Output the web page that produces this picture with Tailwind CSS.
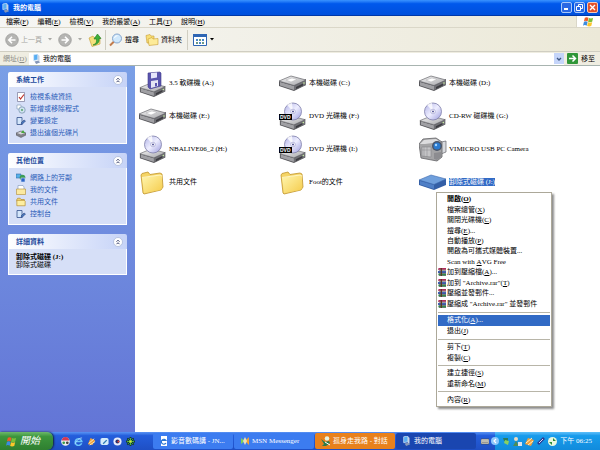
<!DOCTYPE html>
<html lang="zh-Hant">
<head>
    <meta charset="UTF-8">
    <meta name="viewport" content="width=device-width, initial-scale=1.0">
    <title>我的電腦</title>
    <script src="https://cdn.jsdelivr.net/npm/@tailwindcss/browser@4"></script>
</head>
<body class="flex h-screen flex-col overflow-hidden bg-white font-['Liberation_Serif','Noto_Sans_CJK_TC',serif] text-[7px] leading-[10px] text-black">
    <!-- Shared icons, kept out of the flow: gradients are dropped inside display:none -->
    <svg class="absolute size-0" aria-hidden="true">
        <defs>
            <linearGradient id="top" x1="0" y1="0" x2="1" y2="1"><stop offset="0" stop-color="#f6f6f6"/><stop offset="1" stop-color="#a4a4a8"/></linearGradient>
            <linearGradient id="cd" x1="0" y1="0" x2="1" y2="1"><stop offset="0" stop-color="#b0b2e6"/><stop offset=".5" stop-color="#eeeeff"/><stop offset="1" stop-color="#9a9adc"/></linearGradient>
            <linearGradient id="yellow" x1="0" y1="0" x2="1" y2="1"><stop offset="0" stop-color="#fff6b0"/><stop offset="1" stop-color="#f5cc4c"/></linearGradient>
        </defs>
        <symbol id="computer" viewBox="0 0 10 12">
            <path d="M1 1l5-1v7l-5 1z" fill="#58aef2" stroke="#dbeaf8" stroke-width=".8"/>
            <path d="M6 1l2 1v7l-2 1z" fill="#c9d4e4"/>
            <path d="M2 9l4-1 3 2-5 2z" fill="#8597b8"/>
        </symbol>
        <symbol id="drive" viewBox="0 0 28 16">
            <path d="M0 6v5l15 5 12-6V4L15 10z" fill="#58585c"/>
            <path d="M1 7l14 4v4L1 10.500z" fill="#a0a0a4"/>
            <path d="M15 11l12-6v5l-12 5z" fill="#707075"/>
            <path d="M0 6l12-5 15 4-12 5.500z" fill="url(#top)" stroke="#66666b" stroke-width=".7"/>
            <path d="M17 12l7-3.500v2L17 14z" fill="#3c3c40"/>
            <circle cx="25" cy="8" r=".8" fill="#c8f0a0"/>
        </symbol>
        <symbol id="hdd" viewBox="0 0 28 28">
            <use href="#drive" y="6" width="28" height="16"/>
            <path d="M7 11l6-2 5 1.500-6 2.500z" fill="#fff" stroke="#b0b0b4" stroke-width=".5"/>
        </symbol>
        <symbol id="floppy" viewBox="0 0 28 28">
            <use href="#drive" y="13" width="28" height="15"/>
            <path d="M9 4l12-1 1 1v13l-11 3-2-2z" fill="#5a55ae" stroke="#413d8c" stroke-width=".6"/>
            <path d="M12 4l6-.5v5l-6 1z" fill="#e6e6fa"/>
            <path d="M12 12l7-1v6l-7 2z" fill="#e4e6f4"/>
            <path d="M16 14l2 0v3l-2 .5z" fill="#5a55ae"/>
        </symbol>
        <symbol id="disc" viewBox="0 0 28 28">
            <use href="#drive" y="13" width="28" height="15"/>
            <circle cx="14" cy="9.500" r="8.500" fill="url(#cd)" stroke="#7c7ca8" stroke-width=".8"/>
            <path d="M14 9.500L8 3a9 9 0 0 1 5-2z" fill="#fff" opacity=".8"/>
            <circle cx="14" cy="9.500" r="2.300" fill="#fff" stroke="#9494c8" stroke-width=".6"/>
            <circle cx="14" cy="9.500" r="1" fill="#55559a"/>
        </symbol>
        <symbol id="folder" viewBox="0 0 28 28">
            <path d="M2 7l1-1.500L9 4l2 2.500L21 5l2 1 1 13-2 3L5 26l-1-1z" fill="#f5d465" stroke="#c0942c" stroke-width=".8"/>
            <path d="M3 10l18-3 2 1v12l-2 2L5 25z" fill="url(#yellow)"/>
            <path d="M3 9.500L21 7l2 1" fill="none" stroke="#fffbd8" stroke-width=".8"/>
        </symbol>
        <symbol id="camera" viewBox="0 0 28 28">
            <path d="M22 7l5-1v11l-5 2z" fill="#d8dade" stroke="#66666b" stroke-width=".7"/>
            <path d="M0 9l4-5 13-1 6 4v15l-5 4L2 23z" fill="#a4a4a6" stroke="#626266" stroke-width=".8"/>
            <path d="M1 9l4-4 12-1 4 3-15 2z" fill="#dcdcde"/>
            <path d="M3 12h9v10l-9-1z" fill="#c4c4c6" stroke="#7c7c80" stroke-width=".5"/>
            <path d="M5 12v10M8 12v10M3 15h9" stroke="#88888c" stroke-width=".5"/>
            <circle cx="18" cy="11" r="5" fill="#4b5568"/>
            <circle cx="18" cy="11" r="3.500" fill="#2a7ad0"/>
            <circle cx="17" cy="10" r="1.200" fill="#a5d6ff"/>
            <path d="M15 18l7-1v5l-4 3-3-1z" fill="#8c8c90"/>
        </symbol>
        <symbol id="removable" viewBox="0 0 28 28">
            <path d="M0 12v5l15 5 12-5v-6z" fill="#345fa6"/>
            <path d="M0 12l12-5 15 4-12 5.500z" fill="#6f9fdc" stroke="#3e69ae" stroke-width=".6"/>
            <path d="M1 13l14 4v4L1 16.500z" fill="#4f7fc6"/>
        </symbol>
        <symbol id="books" viewBox="0 0 9 9">
            <path d="M0 1l1-1h8v2H0z" fill="#b02c5c"/>
            <path d="M0 3.500h9v2H0z" fill="#2c4ea8"/>
            <path d="M0 6.500h9v2H1z" fill="#2f8c4c"/>
            <path d="M1 2.500h8M1 6h8M1 8.800h8" stroke="#222" stroke-width=".7"/>
            <path d="M3 0h1.500v9H3z" fill="#5b3a22"/>
        </symbol>
        <symbol id="flag" viewBox="0 0 12 12">
            <path d="M2 2q2-1.500 4 0L5 6Q3 4.500 1 6z" fill="#f05a28"/>
            <path d="M6.500 2.300q2 1 4.500 0l-1 4q-2.500 1-4.500 0z" fill="#7cbf3a"/>
            <path d="M1 6.600q2-1.500 4 0l-1 4q-2-1.500-4 0z" fill="#3c8ce0"/>
            <path d="M5.500 6.900q2 1 4.500 0l-1 4q-2.500 1-4.500 0z" fill="#fcc62c"/>
        </symbol>
        <symbol id="smallfolder" viewBox="0 0 12 12">
            <path d="M1 3l1-1.500h3L6 3h4v2H1z" fill="#f5dc7c" stroke="#b48a28" stroke-width=".8"/>
            <path d="M1 10.500V4h9l1 1v5.500z" fill="#fdeea0" stroke="#b48a28" stroke-width=".8"/>
        </symbol>
        <symbol id="collapse" viewBox="0 0 10 10">
            <circle cx="5" cy="5" r="4.500" fill="#fff" stroke="#a4b2d4" stroke-width=".7"/>
            <path d="M3.500 4.700L5 3.200l1.500 1.500M3.500 7.200L5 5.700l1.500 1.500" fill="none" stroke="#27305c" stroke-width=".9"/>
        </symbol>
        <symbol id="settings" viewBox="0 0 10 10">
            <path d="M1 1.500h5v7H1z" fill="#d4e6fb" stroke="#34508c" stroke-width=".8"/>
            <path d="M5 7l3-3 1.500 1L6 8.500z" fill="#4878bc" stroke="#1e3670" stroke-width=".5"/>
        </symbol>
        <symbol id="caret" viewBox="0 0 4 3"><path d="M0 0h4L2 2.500z" fill="currentColor"/></symbol>
    </svg>

    <!-- Title bar -->
    <header class="flex h-4 shrink-0 items-center justify-between bg-linear-to-b from-[#3a93ff] via-[#0058ec] via-25% to-[#0050dc] pr-0.5 pl-0.5 text-white border-b border-[#0038a8]">
        <h1 class="flex items-center gap-[3px] font-bold"><svg class="h-2.5 w-2"><use href="#computer"/></svg>我的電腦</h1>
        <div class="flex gap-0.5">
            <button aria-label="最小化" class="flex h-[11px] w-[11px] items-end rounded-xs border border-[#a9c8f8] bg-[#2a68e4] p-0.5"><span class="h-0.5 w-1 bg-white"></span></button>
            <button aria-label="還原" class="h-[11px] w-[11px] rounded-xs border border-[#a9c8f8] bg-[#2a68e4]"><svg viewBox="0 0 9 9"><path d="M3.500 3V1.500h4v4H6M1.500 3.500h4v4h-4z" fill="none" stroke="#fff"/></svg></button>
            <button aria-label="關閉" class="h-[11px] w-[11px] rounded-xs border border-[#f4c8b8] bg-[#e2532c]"><svg viewBox="0 0 9 9"><path d="M2 2l5 5M7 2L2 7" stroke="#fff" stroke-width="1.400"/></svg></button>
        </div>
    </header>

    <!-- Menu bar -->
    <nav class="flex h-3 shrink-0 items-stretch justify-between border-b border-[#dad7c8] bg-linear-to-r from-[#f6f6f4] to-[#ece9d8]">
        <div class="flex items-center gap-[9px] pl-1.5">
            <button>檔案(<u>F</u>)</button>
            <button>編輯(<u>E</u>)</button>
            <button>檢視(<u>V</u>)</button>
            <button>我的最愛(<u>A</u>)</button>
            <button>工具(<u>T</u>)</button>
            <button>說明(<u>H</u>)</button>
        </div>
        <div class="flex w-6 items-center justify-center border-l border-[#dad7c8] bg-white"><svg class="h-[11px] w-[11px]"><use href="#flag"/></svg></div>
    </nav>

    <!-- Toolbar -->
    <div class="flex h-6 shrink-0 items-center border-b border-[#d0cec2] bg-linear-to-r from-[#f6f6f4] to-[#ece9d8] pl-[5px]">
        <button class="flex items-center gap-0.5 text-[#a8a8a4]">
            <svg class="size-3.5" viewBox="0 0 14 14"><circle cx="7" cy="7" r="6.300" fill="#b5b5b3" stroke="#989896" stroke-width=".7"/><path d="M10.500 7H4M7 3.800L3.800 7 7 10.200" fill="none" stroke="#fff" stroke-width="1.600"/></svg>
            上一頁
            <svg class="ml-1 h-[3px] w-1"><use href="#caret"/></svg>
        </button>
        <button aria-label="下一頁" class="ml-1.5 flex items-center gap-1.5 text-[#a8a8a4]">
            <svg class="size-3.5" viewBox="0 0 14 14"><circle cx="7" cy="7" r="6.300" fill="#b5b5b3" stroke="#989896" stroke-width=".7"/><path d="M3.500 7H10M7 3.800L10.200 7 7 10.200" fill="none" stroke="#fff" stroke-width="1.600"/></svg>
            <svg class="h-[3px] w-1"><use href="#caret"/></svg>
        </button>
        <button aria-label="往上" class="ml-1.5">
            <svg class="size-3.5" viewBox="0 0 14 14"><path d="M1 5l4-2 1 1.500L12 4v7l-8 2.500z" fill="#f5e07c" stroke="#c29a34" stroke-width=".6"/><path d="M5 12c3-1 4-3 3.500-6H6l3.500-5L13 5.500h-2C12 9 9 12 5 12z" fill="#3eb03a" stroke="#1c7a22" stroke-width=".6"/></svg>
        </button>
        <span class="mx-[3px] h-5 w-px bg-[#d0cec2]"></span>
        <button class="flex items-center gap-0.5">
            <svg class="size-3.5" viewBox="0 0 14 14"><path d="M5 8.500l-4 4" stroke="#c27c4c" stroke-width="2"/><circle cx="8" cy="5.500" r="4.500" fill="#cfe8fc" stroke="#86a5cc"/><path d="M5.500 5a3 3 0 0 1 3-2.300" stroke="#fff" fill="none"/></svg>
            搜尋
        </button>
        <button class="ml-1.5 flex items-center gap-0.5">
            <svg class="size-3.5" viewBox="0 0 14 14"><path d="M2 10L1 2.500l4-1 1 1.500h3v7z" fill="#f8df76" stroke="#c79c32" stroke-width=".6"/><path d="M4 12.500L3 6l4-1.500L8 6l5-.5v6z" fill="#fdeb98" stroke="#c79c32" stroke-width=".6"/></svg>
            資料夾
        </button>
        <span class="mx-[5px] h-5 w-px bg-[#d0cec2]"></span>
        <button aria-label="檢視" class="flex items-center gap-[3px]">
            <svg class="h-3 w-3.5" viewBox="0 0 14 12"><path d="M.5.500h13v11H.5z" fill="#fff" stroke="#2f66b4"/><path d="M0 0h14v3H0z" fill="#2f66b4"/><path d="M3 5h2v2H3zM6 8h2v2H6zM9 5h2v2H9z" fill="#4a86c8"/><path d="M6 5h2v2H6zM3 8h2v2H3zM9 8h2v2H9z" fill="#6b9a86"/></svg>
            <svg class="h-[3px] w-1"><use href="#caret"/></svg>
        </button>
    </div>

    <!-- Address bar -->
    <form class="flex h-3.5 shrink-0 items-center border-b border-[#a8b4b0] bg-[#efede1] pl-[3px]">
        <label for="address" class="w-[26px] text-[#8c8c86]">網址(<u>D</u>)</label>
        <div class="flex h-3 flex-1 items-center gap-px bg-white pl-[3px]">
            <svg class="h-2.5 w-2.5"><use href="#computer"/></svg>
            <input id="address" type="text" value="我的電腦" class="h-2.5 min-w-0 flex-1 outline-none">
            <button type="button" aria-label="展開網址" class="flex h-[11px] w-[10px] items-center justify-center bg-[#c5d5fa]"><svg class="h-2 w-2" viewBox="0 0 8 8"><path d="M2 3l2 2 2-2" fill="none" stroke="#3e5680" stroke-width="1.300"/></svg></button>
        </div>
        <button type="button" class="flex items-center gap-[3px] pr-[5px] pl-[3px]">
            <svg class="h-[11px] w-[11px]" viewBox="0 0 11 11"><rect width="11" height="11" rx="1" fill="#2f9638"/><path d="M2 5.500h6M5.500 2.500l3 3-3 3" fill="none" stroke="#fff" stroke-width="1.500"/></svg>
            移至
        </button>
    </form>

    <div class="flex min-h-0 flex-1">
        <!-- Task panes -->
        <aside class="flex w-[135px] shrink-0 flex-col gap-[9px] bg-linear-to-b from-[#7a9fe6] to-[#6375d6] px-2 pt-1.5 text-[#2a5cb8]">
            <section>
                <h2 class="flex h-[15px] items-center justify-between rounded-t-xs bg-linear-to-r from-white to-[#c6d3f7] pr-1 pl-2 font-bold text-[#1c4a9c]">系統工作<button aria-label="收合系統工作"><svg class="size-2.5"><use href="#collapse"/></svg></button></h2>
                <ul class="border border-t-0 border-white bg-[#d6dff7] py-1 pl-[7px] leading-3">
                    <li><a href="#" class="flex items-center gap-1"><svg class="size-2.5" viewBox="0 0 10 10"><path d="M1.500.500h7v9h-7z" fill="#fff" stroke="#7a7a98" stroke-width=".7"/><path d="M3 5l1.500 2L8 2.500" fill="none" stroke="#c0342c" stroke-width="1.200"/></svg>檢視系統資訊</a></li>
                    <li><a href="#" class="flex items-center gap-1"><svg class="size-2.5" viewBox="0 0 10 10"><path d="M1 1h4v4H1z" fill="#fff" stroke="#7c98b4" stroke-width=".6"/><circle cx="6" cy="6" r="3.200" fill="#cfe2ee" stroke="#7490ac" stroke-width=".7"/><circle cx="6" cy="6" r=".9" fill="#4a9c5c"/></svg>新增或移除程式</a></li>
                    <li><a href="#" class="flex items-center gap-1"><svg class="size-2.5"><use href="#settings"/></svg>變更設定</a></li>
                    <li><a href="#" class="flex items-center gap-1"><svg class="size-2.5" viewBox="0 0 10 10"><path d="M0 5l5-2 5 2v2L5 9.500 0 7z" fill="#82828a" stroke="#4c4c54" stroke-width=".5"/><path d="M1 5l4-1.500L9 5 5 6.500z" fill="#d8d8dc"/><path d="M5 5l2-3 2 3z" fill="#46a83c"/></svg>退出這個光碟片</a></li>
                </ul>
            </section>
            <section>
                <h2 class="flex h-[15px] items-center justify-between rounded-t-xs bg-linear-to-r from-white to-[#c6d3f7] pr-1 pl-2 font-bold text-[#1c4a9c]">其他位置<button aria-label="收合其他位置"><svg class="size-2.5"><use href="#collapse"/></svg></button></h2>
                <ul class="border border-t-0 border-white bg-[#d6dff7] py-1 pl-[7px] leading-3">
                    <li><a href="#" class="flex items-center gap-1"><svg class="size-2.5" viewBox="0 0 10 10"><path d="M0 1h5v4H0z" fill="#58b0e8" stroke="#3468a4" stroke-width=".6"/><circle cx="6.500" cy="4.500" r="2.800" fill="#3c9c58"/><path d="M5 5h4v4H5z" fill="#2c64c8" stroke="#d0e0f8" stroke-width=".6"/></svg>網路上的芳鄰</a></li>
                    <li><a href="#" class="flex items-center gap-1"><svg class="size-2.5" viewBox="0 0 10 10"><path d="M2 .500h5L8 2v5H2z" fill="#fff" stroke="#7c94b8" stroke-width=".6"/><path d="M.5 4h9v5.500h-9z" fill="#fbe9a0" stroke="#b08c34" stroke-width=".6"/></svg>我的文件</a></li>
                    <li><a href="#" class="flex items-center gap-1"><svg class="size-2.5"><use href="#smallfolder"/></svg>共用文件</a></li>
                    <li><a href="#" class="flex items-center gap-1"><svg class="size-2.5"><use href="#settings"/></svg>控制台</a></li>
                </ul>
            </section>
            <section>
                <h2 class="flex h-[15px] items-center justify-between rounded-t-xs bg-linear-to-r from-white to-[#c6d3f7] pr-1 pl-2 font-bold text-[#1c4a9c]">詳細資料<button aria-label="收合詳細資料"><svg class="size-2.5"><use href="#collapse"/></svg></button></h2>
                <div class="border border-t-0 border-white bg-[#d6dff7] pt-1 pb-[5px] pl-[7px] leading-2 text-black">
                    <p class="font-bold">卸除式磁碟 (J:)</p>
                    <p>卸除式磁碟</p>
                </div>
            </section>
        </aside>

        <!-- Drives -->
        <main class="relative flex-1 pl-1">
            <ul class="grid auto-rows-[33px] grid-cols-[repeat(auto-fill,140px)]">
                <li class="flex items-center gap-0.5"><svg class="size-7"><use href="#floppy"/></svg>3.5 軟碟機 (A:)</li>
                <li class="flex items-center gap-0.5"><svg class="size-7"><use href="#hdd"/></svg>本機磁碟 (C:)</li>
                <li class="flex items-center gap-0.5"><svg class="size-7"><use href="#hdd"/></svg>本機磁碟 (D:)</li>
                <li class="flex items-center gap-0.5"><svg class="size-7"><use href="#hdd"/></svg>本機磁碟 (E:)</li>
                <li class="flex items-center gap-0.5">
                    <span class="relative size-7"><svg class="size-7"><use href="#disc"/></svg><span class="absolute top-3 left-0 bg-black px-px font-['Liberation_Sans',sans-serif] text-[5px] leading-[6px] font-bold text-white">DVD</span></span>
                    DVD 光碟機 (F:)
                </li>
                <li class="flex items-center gap-0.5"><svg class="size-7"><use href="#disc"/></svg>CD-RW 磁碟機 (G:)</li>
                <li class="flex items-center gap-0.5"><svg class="size-7"><use href="#disc"/></svg>NBALIVE06_2 (H:)</li>
                <li class="flex items-center gap-0.5">
                    <span class="relative size-7"><svg class="size-7"><use href="#disc"/></svg><span class="absolute top-3 left-0 bg-black px-px font-['Liberation_Sans',sans-serif] text-[5px] leading-[6px] font-bold text-white">DVD</span></span>
                    DVD 光碟機 (I:)
                </li>
                <li class="flex items-center gap-0.5"><svg class="size-7"><use href="#camera"/></svg>VIMICRO USB PC Camera</li>
                <li class="flex items-center gap-0.5"><svg class="size-7"><use href="#folder"/></svg>共用文件</li>
                <li class="flex items-center gap-0.5"><svg class="size-7"><use href="#folder"/></svg>Foot的文件</li>
                <li class="flex items-center gap-0.5"><svg class="size-7"><use href="#removable"/></svg><span class="bg-[#316ac5] leading-2 text-white">卸除式磁碟 (J:)</span></li>
            </ul>

            <!-- Context menu -->
            <div role="menu" class="absolute top-[126px] left-[301px] w-[116px] border border-[#aca899] bg-white p-px shadow-[2px_2px_2px_rgba(0,0,0,0.45)]">
                <div class="grid h-[115px] auto-rows-fr">
                    <button role="menuitem" class="flex items-center pl-[9px] font-bold">開啟(<u>O</u>)</button>
                    <button role="menuitem" class="flex items-center pl-[9px]">檔案總管(<u>X</u>)</button>
                    <button role="menuitem" class="flex items-center pl-[9px]">關閉光碟機(<u>C</u>)</button>
                    <button role="menuitem" class="flex items-center pl-[9px]">搜尋(<u>E</u>)...</button>
                    <button role="menuitem" class="flex items-center pl-[9px]">自動播放(<u>P</u>)</button>
                    <button role="menuitem" class="flex items-center pl-[9px]">開啟為可攜式媒體裝置...</button>
                    <button role="menuitem" class="flex items-center pl-[9px] whitespace-pre">Scan with <u>A</u>VG Free</button>
                    <button role="menuitem" class="flex items-center"><svg class="mr-px size-2"><use href="#books"/></svg>加到壓縮檔(<u>A</u>)...</button>
                    <button role="menuitem" class="flex items-center whitespace-pre"><svg class="mr-px size-2"><use href="#books"/></svg>加到 "Archive.rar"(<u>T</u>)</button>
                    <button role="menuitem" class="flex items-center"><svg class="mr-px size-2"><use href="#books"/></svg>壓縮並發郵件...</button>
                    <button role="menuitem" class="flex items-center whitespace-pre"><svg class="mr-px size-2"><use href="#books"/></svg>壓縮成 "Archive.rar" 並發郵件</button>
                </div>
                <hr class="mt-[3px] mb-0.5 border-[#b8b5a8]">
                <div class="grid h-[21px] auto-rows-fr">
                    <button role="menuitem" class="flex items-center bg-[#316ac5] pl-[9px] text-white">格式化(<u>A</u>)...</button>
                    <button role="menuitem" class="flex items-center pl-[9px]">退出(<u>J</u>)</button>
                </div>
                <hr class="mt-[3px] mb-0.5 border-[#b8b5a8]">
                <div class="grid h-[21px] auto-rows-fr">
                    <button role="menuitem" class="flex items-center pl-[9px]">剪下(<u>T</u>)</button>
                    <button role="menuitem" class="flex items-center pl-[9px]">複製(<u>C</u>)</button>
                </div>
                <hr class="my-0.5 border-[#b8b5a8]">
                <div class="grid h-[21px] auto-rows-fr">
                    <button role="menuitem" class="flex items-center pl-[9px]">建立捷徑(<u>S</u>)</button>
                    <button role="menuitem" class="flex items-center pl-[9px]">重新命名(<u>M</u>)</button>
                </div>
                <hr class="my-0.5 border-[#b8b5a8]">
                <button role="menuitem" class="flex h-[11px] items-center pl-[9px]">內容(<u>R</u>)</button>
            </div>
        </main>
    </div>

    <!-- Taskbar -->
    <footer class="flex h-[18px] shrink-0 items-stretch bg-linear-to-b from-[#5a94f4] via-[#245edc] via-20% to-[#1f4fc4] text-white">
        <button class="flex w-[53px] items-center gap-[3px] rounded-r-md bg-linear-to-b from-[#6cb86a] via-[#3c963c] via-25% to-[#2f7f30] pl-1.5 text-[10px] italic shadow-[1px_0_2px_#123]"><svg class="size-[11px]"><use href="#flag"/></svg>開始</button>
        <div class="ml-2 flex w-[92px] items-center gap-1">
            <button aria-label="相簿"><svg class="size-[9px]" viewBox="0 0 10 10"><circle cx="5" cy="5" r="4.800" fill="#eee"/><path d="M1 4a4 4 0 0 1 8 0z" fill="#d43a52"/><circle cx="3" cy="6.500" r="1.500" fill="#3a9a4a"/><circle cx="7" cy="6.500" r="1.500" fill="#444"/></svg></button>
            <button aria-label="Internet Explorer"><svg class="size-[9px]" viewBox="0 0 10 10"><path d="M8.500 7A3.700 3.700 0 1 1 8.700 5H2" fill="none" stroke="#6cc4fa" stroke-width="1.700"/><path d="M1 8Q4 1 9 1" fill="none" stroke="#b8e4ff" stroke-width=".8"/></svg></button>
            <button aria-label="媒體播放"><svg class="size-[9px]" viewBox="0 0 10 10"><path d="M1 8l3-7 5 3-3 5z" fill="#f0a03a"/><path d="M2 7l6-5M3 9l6-4" stroke="#fff2c4"/></svg></button>
            <button aria-label="顯示桌面"><svg class="size-[9px]" viewBox="0 0 10 10"><rect x=".5" y="1" width="9" height="8" rx="2" fill="#d4ecfa"/><path d="M3 7l4-4 1 1-4 4z" fill="#2c78b4"/></svg></button>
            <button aria-label="播放程式"><svg class="size-[9px]" viewBox="0 0 10 10"><circle cx="5" cy="5" r="4.500" fill="#e8ecfa"/><circle cx="5" cy="5" r="2.300" fill="#27306c"/><circle cx="6" cy="5" r="1" fill="#f04a3a"/></svg></button>
            <button aria-label="ICQ"><svg class="size-[9px]" viewBox="0 0 10 10"><path d="M5 0v10M0 5h10M1.500 1.500l7 7M8.500 1.500l-7 7" stroke="#123c1c" stroke-width="2"/><path d="M5 1v8M1 5h8M2.500 2.500l5 5M7.500 2.500l-5 5" stroke="#5cc04a"/><circle cx="5" cy="5" r="1.200" fill="#f0e040"/></svg></button>
        </div>
        <div class="flex min-w-0 flex-1 gap-px py-px">
            <button class="flex w-20 items-center gap-0.5 rounded-xs bg-[#3c7cf0] pl-1.5"><svg class="size-2.5" viewBox="0 0 10 10"><path d="M2 0h6v10H2z" fill="#fff"/><path d="M7 7A2.500 2.500 0 1 1 7 4.500H3" fill="none" stroke="#2a74d0" stroke-width="1.200"/></svg>影音數碼講 - JN...</button>
            <button class="flex w-20 items-center gap-0.5 rounded-xs bg-[#3c7cf0] pl-1.5"><svg class="size-2.5" viewBox="0 0 10 10"><path d="M1 2l4 3-4 3z" fill="#7ad05a"/><path d="M9 1L5 5l4 4z" fill="#f4a030"/><path d="M5 1l2 4-2 4-2-4z" fill="#e8e0c0"/></svg>MSN Messenger</button>
            <button class="flex w-20 items-center gap-0.5 rounded-xs bg-[#e8811c] pl-1.5"><svg class="size-2.5" viewBox="0 0 10 10"><circle cx="6" cy="2.500" r="2.300" fill="#e8f4e0"/><path d="M0 3l4 3 4-1 1 2-4 3H1l2-2z" fill="#2d7c4c"/><path d="M4 6l5 3" stroke="#fff"/></svg>孤身走我路 - 對話</button>
            <button class="flex w-20 items-center gap-0.5 rounded-xs bg-[#1a46b0] pl-1.5"><svg class="size-2.5"><use href="#computer"/></svg>我的電腦</button>
        </div>
        <button aria-label="語言列" class="mr-1.5 shrink-0"><svg class="size-2" viewBox="0 0 8 8"><path d="M0 2h8v5H0z" fill="#e6e2d4" stroke="#444" stroke-width=".6"/><path d="M1 4h6M1 5.500h6" stroke="#666" stroke-width=".6"/></svg></button>
        <div class="flex shrink-0 items-center gap-[3px] bg-linear-to-b from-[#5cc0fa] via-[#189cec] via-20% to-[#118bdc] pr-2">
            <button aria-label="顯示隱藏圖示" class="-ml-1"><svg class="size-2" viewBox="0 0 8 8"><circle cx="4" cy="4" r="4" fill="#8cc8fc"/><path d="M5 2L3 4l2 2" fill="none" stroke="#fff" stroke-width="1.200"/></svg></button>
            <svg class="size-2" viewBox="0 0 8 8"><path d="M1 1h5v3H2z" fill="#2c7c5c"/><path d="M3 3l4 1-1 4-4-2z" fill="#8ad060"/></svg>
            <svg class="size-[9px]" viewBox="0 0 9 9"><circle cx="3" cy="2" r="2" fill="#eedcc0"/><path d="M0 9l3-5 3 5z" fill="#4c8c58"/><path d="M5 5h4v4H5z" fill="#dce4ee"/></svg>
            <svg class="size-[9px]" viewBox="0 0 9 9"><path d="M0 7l3-6 6 2-3 6z" fill="#f0a03a"/><path d="M1 6l6-5M3 8l5-4" stroke="#fff2c4"/></svg>
            <svg class="size-2" viewBox="0 0 8 8"><path d="M0 6l6-6 2 2-6 6z" fill="#2c3c94"/><path d="M2 6l4-4" stroke="#d4dcf8"/></svg>
            <svg class="size-[9px]" viewBox="0 0 9 9"><circle cx="4.500" cy="4.500" r="4.500" fill="#e8f8e0"/><path d="M4 1v4H1l3 3zM5 8V4h3L5 1z" fill="#2f8c3c"/></svg>
            <time>下午 06:25</time>
        </div>
    </footer>
</body>
</html>
